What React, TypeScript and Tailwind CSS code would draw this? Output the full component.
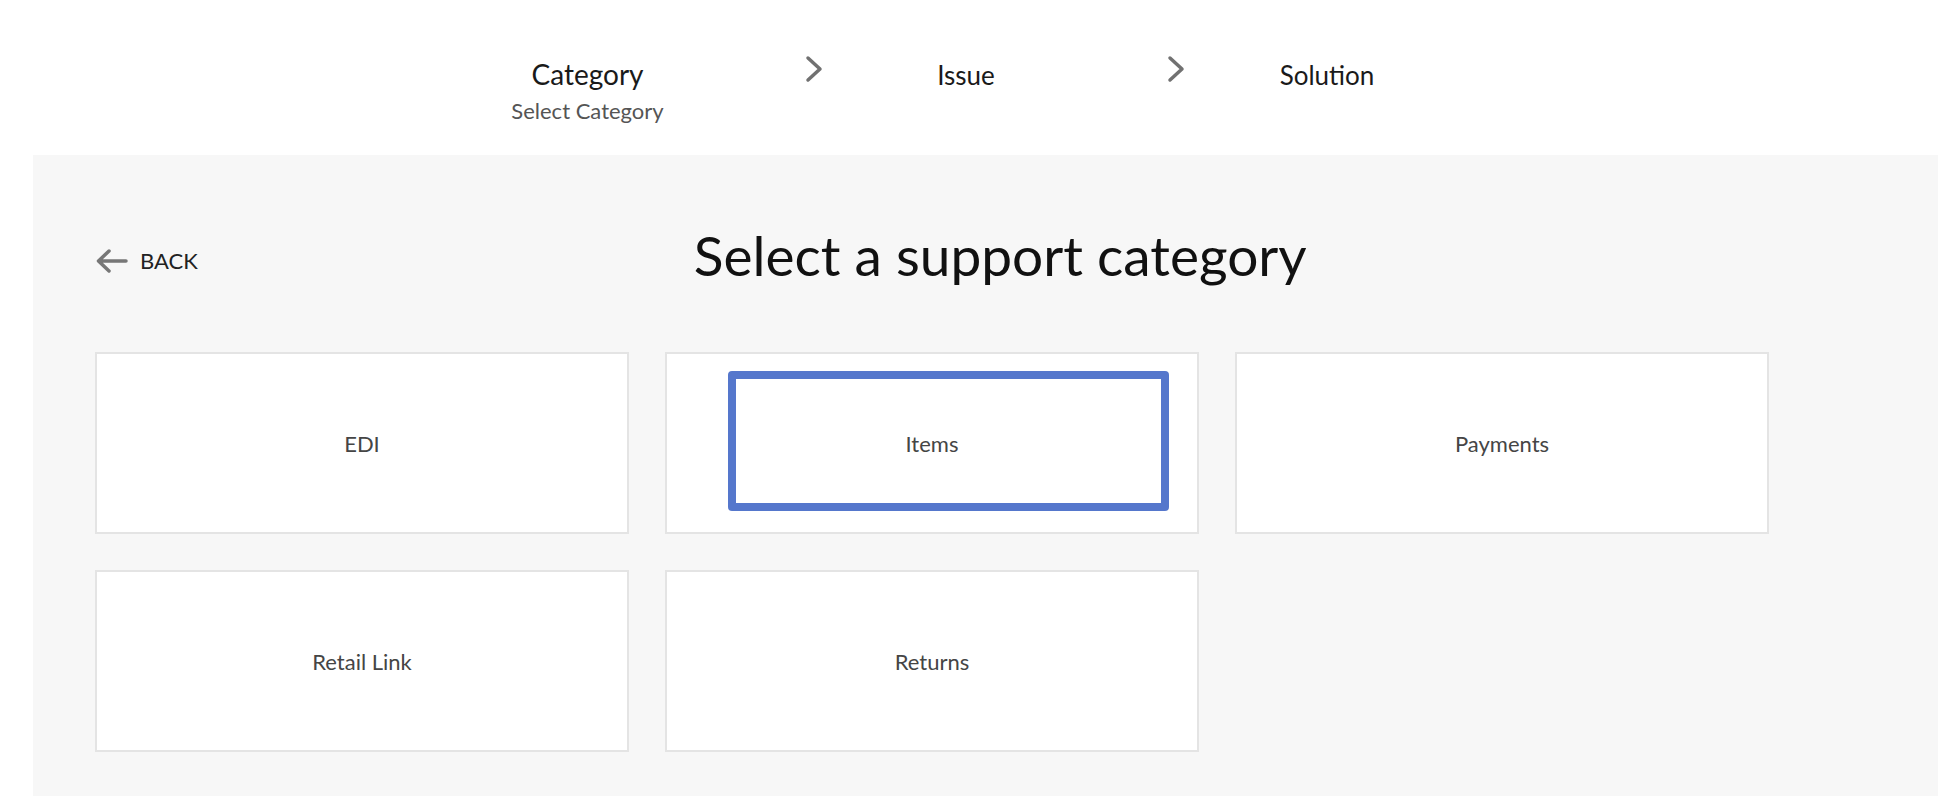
const categories = ["EDI", "Items", "Payments", "Retail Link", "Returns"];

function Chevron() {
  return (
    <svg width="18" height="28" viewBox="0 0 18 28" fill="none">
      <polyline
        points="3,3 15,14 3,25"
        stroke="#717171"
        strokeWidth="3.5"
        strokeLinecap="round"
        strokeLinejoin="round"
      />
    </svg>
  );
}

function Stepper() {
  return (
    <div className="flex h-[155px] items-start pl-[510px] pt-[56px]">
      <div className="flex w-[155px] flex-col items-center">
        <span className="mt-px text-[28px] leading-[34px] text-[#1a1a1a]">Category</span>
        <span className="mt-[7px] text-[22px] leading-[26px] whitespace-nowrap text-[#555]">
          Select Category
        </span>
      </div>
      <div className="ml-[140px] -mt-px">
        <Chevron />
      </div>
      <div className="ml-[43px] mt-[4px] w-[200px] text-center text-[26px] leading-[31px] text-[#1a1a1a]">
        Issue
      </div>
      <div className="ml-[101px] -mt-px">
        <Chevron />
      </div>
      <div className="mt-[4px] w-[284px] text-center text-[26px] leading-[31px] text-[#1a1a1a]">
        Solution
      </div>
    </div>
  );
}

export default function App() {
  return (
    <div className="h-[798px] w-full overflow-hidden bg-white font-['Lato',sans-serif]">
      <Stepper />
      <div className="ml-[33px] h-[641px] bg-[#f7f7f7] pl-[62px] pt-[67px]">
        <div className="flex h-[67px] items-center">
          <button className="mt-[10px] flex items-center gap-[12px] text-[22px] text-[#222]">
            <svg width="33" height="26" viewBox="0 0 33 26" fill="none">
              <path
                d="M31 13H4M14 3L3.5 13L14 23"
                stroke="#777"
                strokeWidth="3.5"
                strokeLinecap="round"
                strokeLinejoin="round"
              />
            </svg>
            BACK
          </button>
          <h1 className="ml-[496px] text-[55px] leading-[67px] font-normal text-[#111]">
            Select a support category
          </h1>
        </div>
        <div className="mt-[63px] grid grid-cols-[534px_534px_534px] gap-x-[36px] gap-y-[36px]">
          {categories.map((c) => (
            <div
              key={c}
              className="relative flex h-[182px] items-center justify-center border-2 border-[#e4e4e4] bg-white text-[22px] text-[#454545]"
            >
              {c}
              {c === "Items" && (
                <div className="absolute left-[61px] top-[17px] h-[140px] w-[441px] rounded-[4px] border-[8px] border-[#5577cc]" />
              )}
            </div>
          ))}
        </div>
      </div>
    </div>
  );
}
